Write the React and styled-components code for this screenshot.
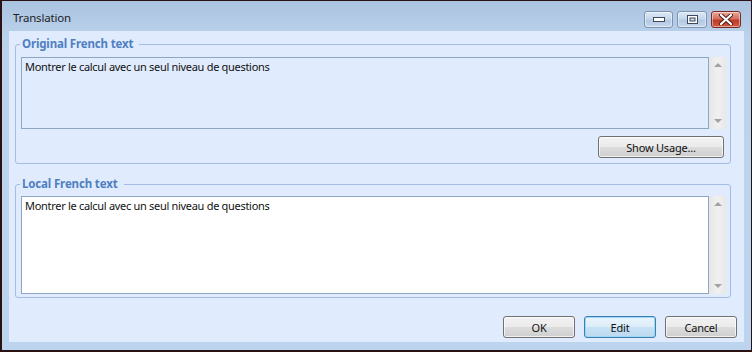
import React from 'react'
import styled, { createGlobalStyle } from 'styled-components'

const Global = createGlobalStyle`
  html, body { margin: 0; padding: 0; background: #ffffff; }
  body { font-family: "Noto Sans", "Liberation Sans", sans-serif; }
`

const Window = styled.div`
  width: 752px;
  height: 352px;
  box-sizing: border-box;
  border: 1px solid #2a1212;
  border-left-width: 2px;
  border-bottom-width: 2px;
  background: linear-gradient(#aac3e0, #bcd3ec 40px, #bcd4ed);
  display: flex;
  flex-direction: column;
`

const TitleBar = styled.div`
  height: 30px;
  display: flex;
  align-items: center;
  padding: 0 10px 0 11px;
  flex-shrink: 0;
`

const Title = styled.div`
  flex: 1;
  font-size: 11.5px;
  letter-spacing: -0.2px;
  color: #1e1e1e;
  margin-top: 2px;
`

const Caption = styled.div`
  display: flex;
  gap: 4px;
  align-self: flex-start;
  margin-top: 10px;
`

const CapButton = styled.div`
  width: ${p => p.w}px;
  height: 17px;
  box-sizing: border-box;
  border: 1px solid ${p => (p.close ? '#7a2a22' : '#7e92ad')};
  border-radius: 3px;
  background: ${p =>
    p.close
      ? 'linear-gradient(#e8a89b, #d3705e 45%, #bf3b28 55%, #cc5a40)'
      : 'linear-gradient(#dce8f5, #c6d8ec 45%, #b3c9e2 55%, #c5d8ee)'};
  box-shadow: inset 0 0 0 1px rgba(255, 255, 255, 0.45);
  display: flex;
  align-items: center;
  justify-content: center;
`

const Frame = styled.div`
  flex: 1;
  padding: 0 7px 8px 7px;
  display: flex;
`

const Content = styled.div`
  flex: 1;
  background: #e0ebfd;
  padding: 5px 7px 4px 6px;
  display: flex;
  flex-direction: column;
`

const Group = styled.fieldset`
  margin: 0;
  padding: ${p => p.pad};
  border: 1px solid #a3bde2;
  border-radius: 3px;
  min-width: 0;
  margin-right: 6px;
  & + & {
    margin-top: 12px;
  }
`

const Legend = styled.legend`
  padding: 0 6px 0 2px;
  margin-left: -1px;
  font-size: 11.5px;
  letter-spacing: -0.15px;
  font-weight: bold;
  line-height: 16px;
  color: #4f7fc2;
`

const TextRow = styled.div`
  display: flex;
  height: ${p => p.h}px;
`

const TextBox = styled.div`
  flex: 1;
  box-sizing: border-box;
  border: 1px solid #8ea6c6;
  background: ${p => (p.white ? '#ffffff' : '#e0ebfd')};
  padding: 2px 3px;
  font-size: 11px;
  letter-spacing: -0.3px;
  line-height: 14px;
  color: #111;
`

const ScrollBar = styled.div`
  width: 17px;
  background: linear-gradient(90deg, #e6e6e6, #f0f0f0 50%, #e8e8e8);
  display: flex;
  flex-direction: column;
  justify-content: space-between;
  align-items: center;
  padding: 6px 0;
  box-sizing: border-box;
`

const Arrow = styled.div`
  width: 0;
  height: 0;
  border-left: 4px solid transparent;
  border-right: 4px solid transparent;
  ${p =>
    p.down
      ? 'border-top: 4px solid #a2a2a2;'
      : 'border-bottom: 4px solid #a2a2a2;'}
`

const UsageRow = styled.div`
  display: flex;
  justify-content: flex-end;
  margin-top: 7px;
  padding-right: 2px;
`

const Button = styled.button`
  width: ${p => p.w}px;
  height: 22px;
  box-sizing: border-box;
  border: 1px solid ${p => (p.focus ? '#3c7fb1' : '#707070')};
  border-radius: 3px;
  background: ${p =>
    p.focus
      ? 'linear-gradient(#eaf5fc, #dcecf8 50%, #c8e2f5 50%, #bcdaf0)'
      : 'linear-gradient(#f2f2f2, #ebebeb 50%, #dddddd 50%, #cfcfcf)'};
  box-shadow: inset 0 0 0 1px ${p => (p.focus ? '#9fd6f5' : 'rgba(255,255,255,0.7)')};
  font-family: "Noto Sans", "Liberation Sans", sans-serif;
  font-size: 11px;
  letter-spacing: -0.2px;
  color: #111;
  padding: 0;
`

const Footer = styled.div`
  margin-top: auto;
  display: flex;
  justify-content: flex-end;
  gap: 9px;
`

function TextArea({ h, white, children }) {
  return (
    <TextRow h={h}>
      <TextBox white={white}>{children}</TextBox>
      <ScrollBar>
        <Arrow />
        <Arrow down />
      </ScrollBar>
    </TextRow>
  )
}

export default function App() {
  return (
    <>
      <Global />
      <Window>
        <TitleBar>
          <Title>Translation</Title>
          <Caption>
            <CapButton w={29}>
              <svg width="12" height="5" viewBox="0 0 12 5">
                <rect x="0.5" y="0.5" width="11" height="4" fill="#fff" stroke="#3c4a5c" />
              </svg>
            </CapButton>
            <CapButton w={30}>
              <svg width="11" height="9" viewBox="0 0 11 9">
                <rect x="0.5" y="0.5" width="10" height="8" fill="#fff" stroke="#3c4a5c" />
                <rect x="3" y="3" width="5" height="3" fill="#c9d9ec" stroke="#3c4a5c" strokeWidth="1" />
              </svg>
            </CapButton>
            <CapButton w={30} close>
              <svg width="14" height="11" viewBox="0 0 14 11">
                <path d="M2 1 L12 10 M12 1 L2 10" stroke="#4a1a14" strokeWidth="4" strokeLinecap="round" />
                <path d="M2 1 L12 10 M12 1 L2 10" stroke="#ffffff" strokeWidth="2.2" strokeLinecap="round" />
              </svg>
            </CapButton>
          </Caption>
        </TitleBar>
        <Frame>
          <Content>
            <Group pad="5px 4px 5px 5px">
              <Legend>Original French text</Legend>
              <TextArea h={72}>Montrer le calcul avec un seul niveau de questions</TextArea>
              <UsageRow>
                <Button w={126}>Show Usage...</Button>
              </UsageRow>
            </Group>
            <Group pad="4px 4px 3px 5px">
              <Legend>Local French text</Legend>
              <TextArea h={98} white>
                Montrer le calcul avec un seul niveau de questions
              </TextArea>
            </Group>
            <Footer>
              <Button w={72}>OK</Button>
              <Button w={72} focus>Edit</Button>
              <Button w={72}>Cancel</Button>
            </Footer>
          </Content>
        </Frame>
      </Window>
    </>
  )
}
